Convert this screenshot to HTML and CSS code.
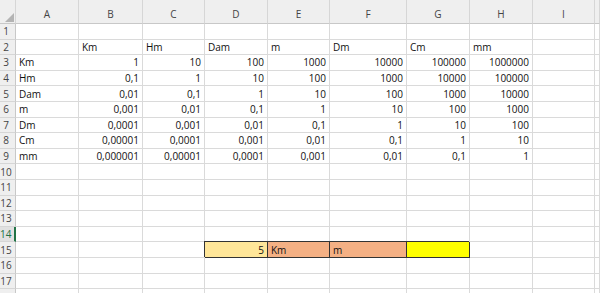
FILE: index.html
```html
<!DOCTYPE html>
<html lang="es">
<head>
    <meta charset="UTF-8">
    <meta name="viewport" content="width=device-width, initial-scale=1.0">
    <title>Conversión de unidades</title>
    <link rel="stylesheet" href="styles.css">
</head>
<body>
    <table class="sheet">
        <colgroup>
            <col class="col-head">
            <col class="col-std"><col class="col-b"><col class="col-c"><col class="col-std"><col class="col-c">
            <col class="col-f"><col class="col-std"><col class="col-std"><col class="col-c"><col class="col-rest">
        </colgroup>
        <thead>
            <tr class="letters">
                <th class="corner">
                    <svg width="9" height="9" viewBox="0 0 9 9"><polygon points="9,0 9,9 0,9" fill="#b4b4b4"/></svg>
                </th>
                <th>A</th><th>B</th><th>C</th><th>D</th><th>E</th><th>F</th><th>G</th><th>H</th><th>I</th><th></th>
            </tr>
        </thead>
        <tbody>
            <tr><th>1</th><td></td><td></td><td></td><td></td><td></td><td></td><td></td><td></td><td></td><td></td></tr>
            <tr><th>2</th><td></td><td>Km</td><td>Hm</td><td>Dam</td><td>m</td><td>Dm</td><td>Cm</td><td>mm</td><td></td><td></td></tr>
            <tr><th>3</th><td>Km</td><td class="num">1</td><td class="num">10</td><td class="num">100</td><td class="num">1000</td><td class="num">10000</td><td class="num">100000</td><td class="num">1000000</td><td></td><td></td></tr>
            <tr><th>4</th><td>Hm</td><td class="num">0,1</td><td class="num">1</td><td class="num">10</td><td class="num">100</td><td class="num">1000</td><td class="num">10000</td><td class="num">100000</td><td></td><td></td></tr>
            <tr><th>5</th><td>Dam</td><td class="num">0,01</td><td class="num">0,1</td><td class="num">1</td><td class="num">10</td><td class="num">100</td><td class="num">1000</td><td class="num">10000</td><td></td><td></td></tr>
            <tr><th>6</th><td>m</td><td class="num">0,001</td><td class="num">0,01</td><td class="num">0,1</td><td class="num">1</td><td class="num">10</td><td class="num">100</td><td class="num">1000</td><td></td><td></td></tr>
            <tr><th>7</th><td>Dm</td><td class="num">0,0001</td><td class="num">0,001</td><td class="num">0,01</td><td class="num">0,1</td><td class="num">1</td><td class="num">10</td><td class="num">100</td><td></td><td></td></tr>
            <tr><th>8</th><td>Cm</td><td class="num">0,00001</td><td class="num">0,0001</td><td class="num">0,001</td><td class="num">0,01</td><td class="num">0,1</td><td class="num">1</td><td class="num">10</td><td></td><td></td></tr>
            <tr><th>9</th><td>mm</td><td class="num">0,000001</td><td class="num">0,00001</td><td class="num">0,0001</td><td class="num">0,001</td><td class="num">0,01</td><td class="num">0,1</td><td class="num">1</td><td></td><td></td></tr>
            <tr><th>10</th><td></td><td></td><td></td><td></td><td></td><td></td><td></td><td></td><td></td><td></td></tr>
            <tr><th>11</th><td></td><td></td><td></td><td></td><td></td><td></td><td></td><td></td><td></td><td></td></tr>
            <tr><th>12</th><td></td><td></td><td></td><td></td><td></td><td></td><td></td><td></td><td></td><td></td></tr>
            <tr><th>13</th><td></td><td></td><td></td><td></td><td></td><td></td><td></td><td></td><td></td><td></td></tr>
            <tr><th class="active">14</th><td></td><td></td><td></td><td></td><td></td><td></td><td></td><td></td><td></td><td></td></tr>
            <tr><th>15</th><td></td><td></td><td></td><td class="num box input">5</td><td class="box unit">Km</td><td class="box unit">m</td><td class="box result"></td><td></td><td></td><td></td></tr>
            <tr><th>16</th><td></td><td></td><td></td><td></td><td></td><td></td><td></td><td></td><td></td><td></td></tr>
            <tr><th>17</th><td></td><td></td><td></td><td></td><td></td><td></td><td></td><td></td><td></td><td></td></tr>
            <tr><th></th><td></td><td></td><td></td><td></td><td></td><td></td><td></td><td></td><td></td><td></td></tr>
        </tbody>
    </table>
</body>
</html>
```

FILE: styles.css
```css
body {
    margin: 0;
    background-color: #fff;
    font-family: "Open Sans", "Liberation Sans", sans-serif;
    font-size: 10px;
    color: #111;
    overflow: hidden;
}

.sheet {
    table-layout: fixed;
    border-collapse: separate;
    border-spacing: 0;
    width: 600px;
}

.col-head { width: 16px; }
.col-std { width: 63px; }
.col-b { width: 64px; }
.col-c { width: 62px; }
.col-f { width: 77px; }
.col-rest { width: 5px; }

.sheet th,
.sheet td {
    box-sizing: border-box;
    padding: 0 3px;
    line-height: 12px;
    white-space: nowrap;
    overflow: hidden;
    border-right: 1px solid #dadada;
    border-bottom: 1px solid #dadada;
    text-align: left;
    font-weight: normal;
}

.sheet tbody tr {
    height: 15.6px;
}

.letters {
    height: 24px;
}

.letters th {
    background-color: #efefef;
    color: #444;
    text-align: center;
    vertical-align: bottom;
    padding-bottom: 3px;
    border-right-color: #d6d6d6;
    border-bottom-color: #c8c8c8;
}

.letters .corner {
    padding: 0 1px 1px 0;
    text-align: right;
    line-height: 0;
}

.sheet tbody th {
    background-color: #efefef;
    color: #444;
    text-align: center;
    padding: 0 3px 0 0;
    border-right-color: #c8c8c8;
    border-bottom-color: #d6d6d6;
}

.sheet tbody th.active {
    background-color: #e1e1e1;
    color: #217346;
    border-right: 2px solid #217346;
}

.num {
    text-align: right !important;
}

.box {
    border-right-color: #333 !important;
    border-bottom-color: #333 !important;
    box-shadow: -1px -1px 0 #333;
}

.input {
    background-color: #ffe699;
}

.unit {
    background-color: #f4b084;
}

.result {
    background-color: #ffff00;
}
```
